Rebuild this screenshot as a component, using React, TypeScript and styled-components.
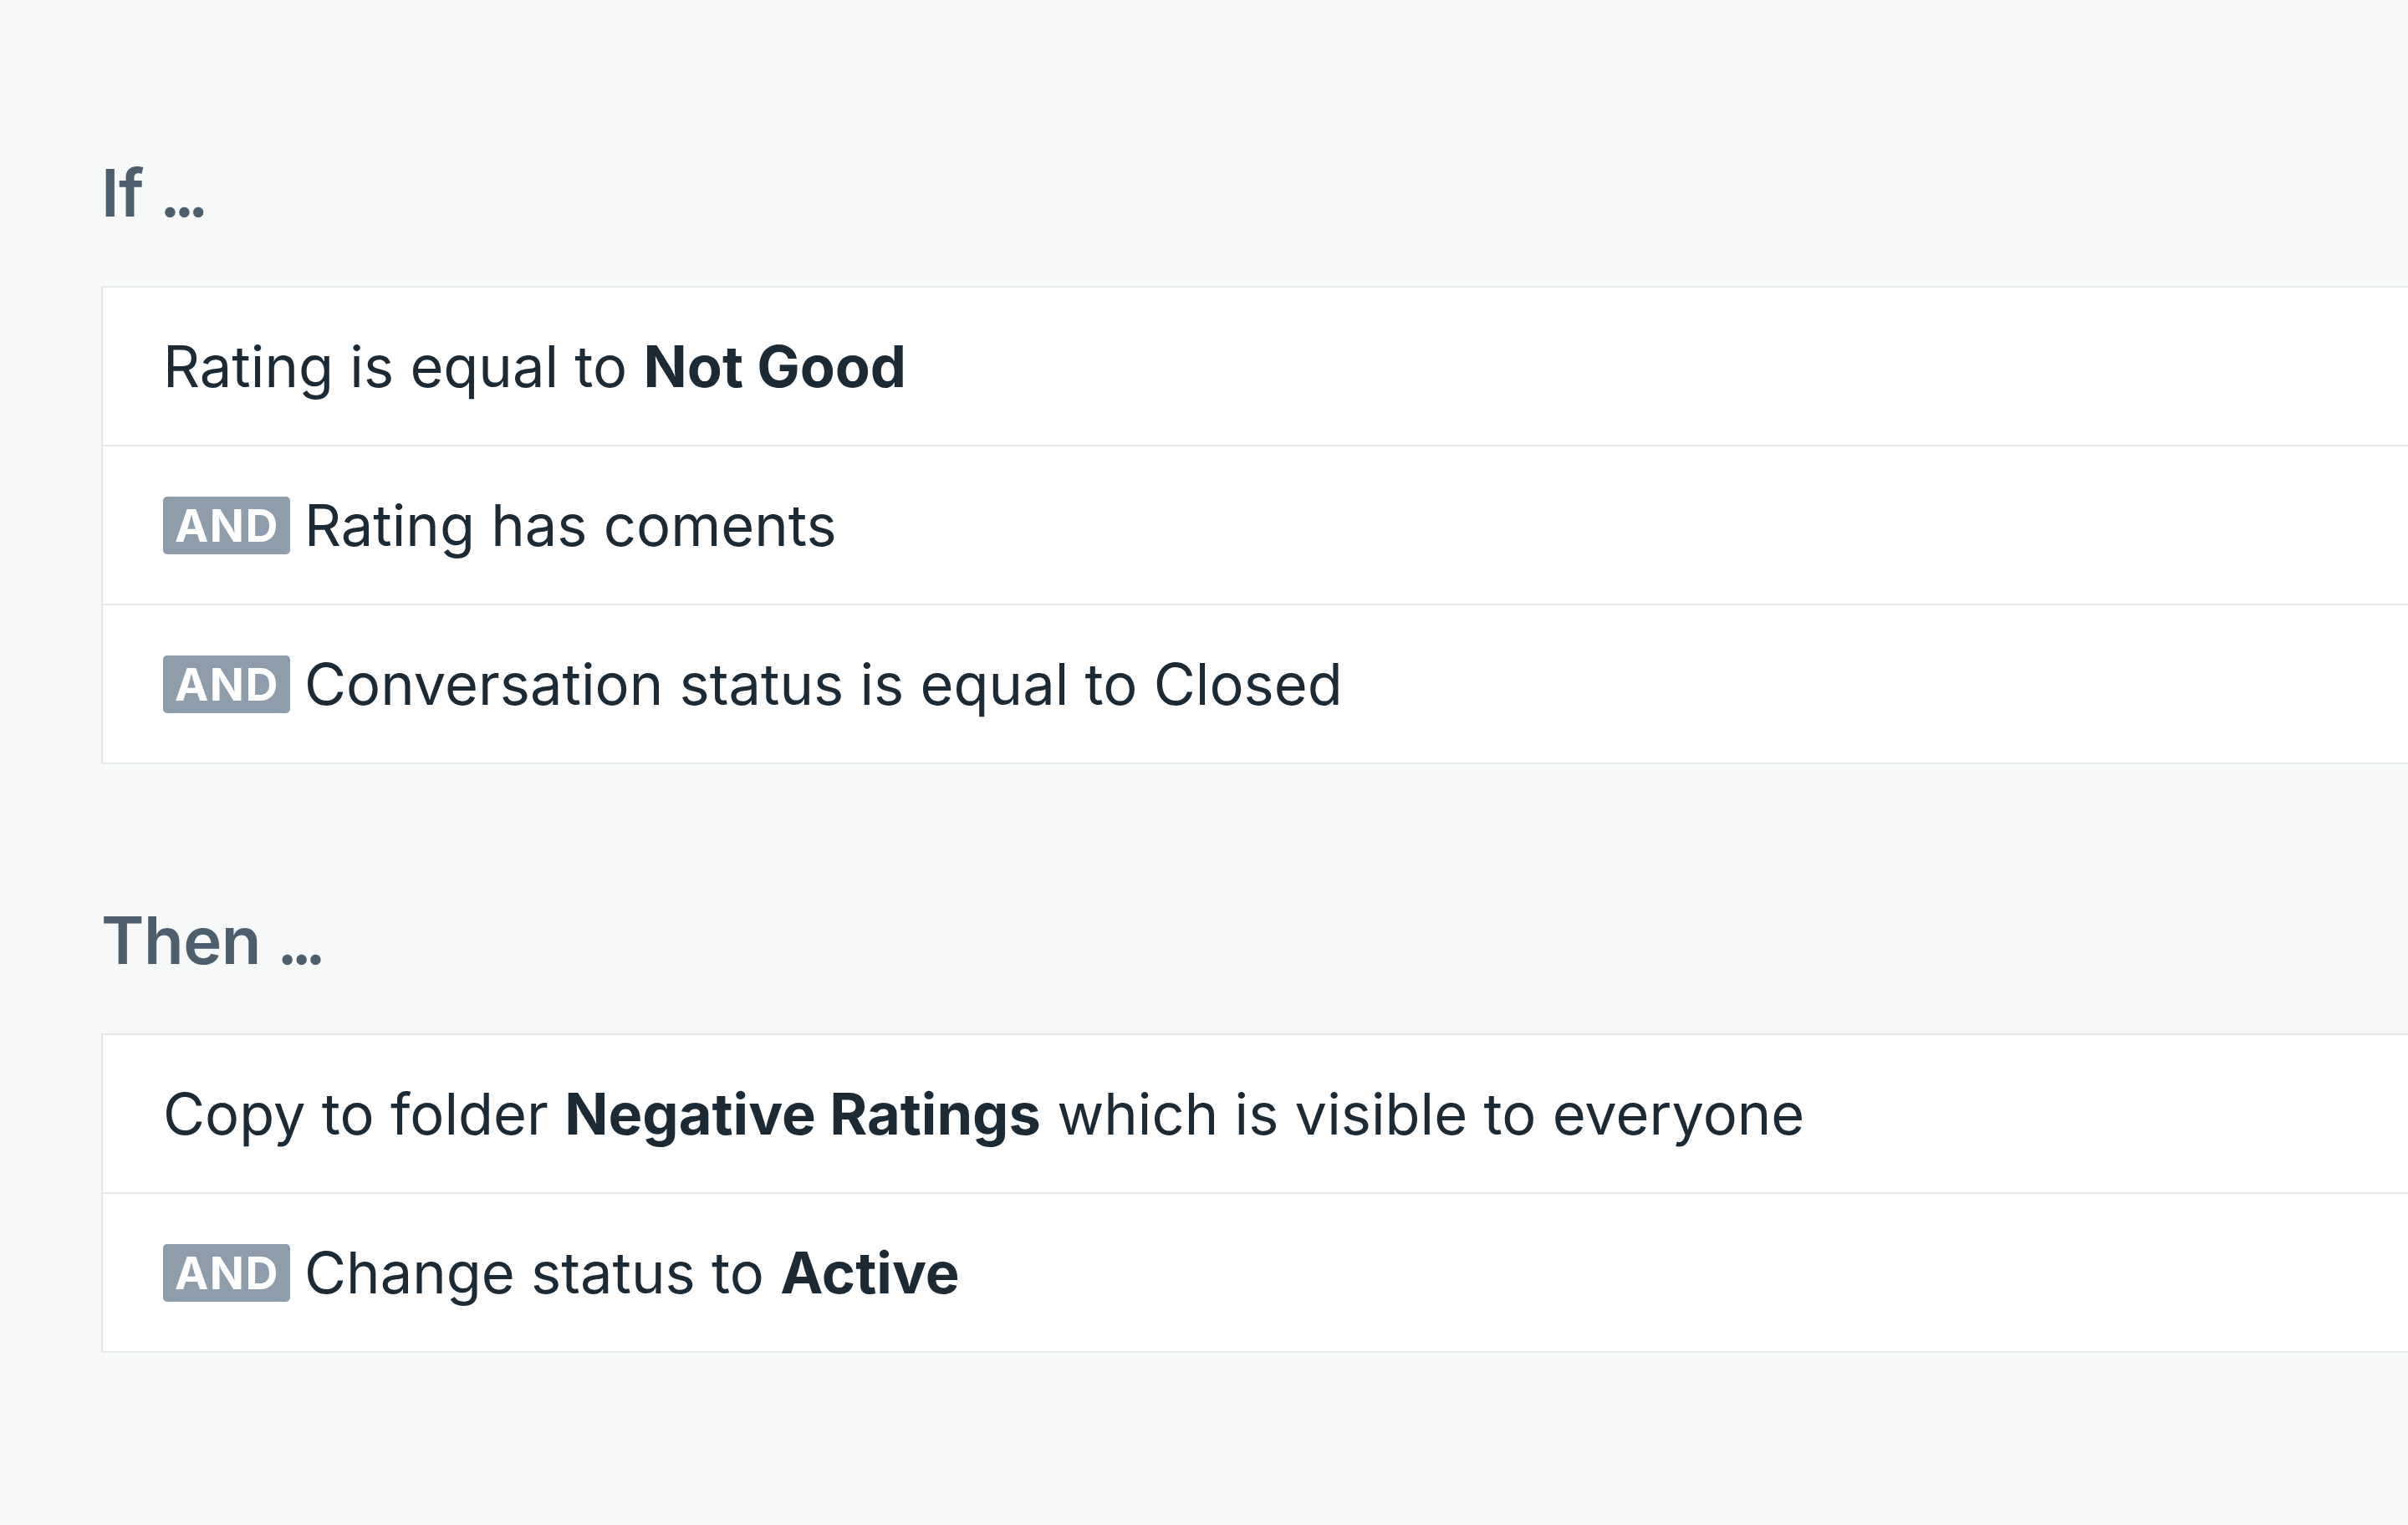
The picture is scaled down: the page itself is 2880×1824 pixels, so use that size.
import React from "react";
import styled, { createGlobalStyle } from "styled-components";

const GlobalStyle = createGlobalStyle`
  html, body {
    margin: 0;
    padding: 0;
    background: #f7f9f9;
    overflow: hidden;
  }

  body {
    font-family: Inter, "Noto Sans", "Liberation Sans", sans-serif;
    color: #1b2a35;
  }
`;

const Page = styled.div`
  width: 2880px;
  height: 1824px;
  padding: 192px 0 0 121px;
  box-sizing: border-box;
  overflow: hidden;
`;

const Section = styled.section<{ $gap?: number }>`
  margin-top: ${(p) => p.$gap || 0}px;
`;

const Heading = styled.h2`
  margin: 0 0 72px;
  font-size: 78px;
  line-height: 1;
  font-weight: 600;
  color: #4d5f6d;
  letter-spacing: -0.5px;
`;

const Dots = styled.span`
  letter-spacing: -8px;
`;

const Card = styled.div`
  background: #fff;
  border: 2px solid #e4e8e9;
  margin-right: -40px;
`;

const Row = styled.div`
  display: flex;
  align-items: center;
  gap: 17px;
  height: 188px;
  padding-left: 72px;
  font-size: 68.6px;
  font-weight: 400;
  color: #1b2a35;

  & + & {
    border-top: 2px solid #e4e8e9;
  }

  b {
    font-weight: 700;
  }
`;

const Badge = styled.span`
  display: inline-flex;
  align-items: center;
  height: 69px;
  padding: 0 13px 0 14px;
  border-radius: 5px;
  background: #8e9dab;
  color: #fff;
  font-size: 54px;
  font-weight: 700;
  letter-spacing: 1.5px;
`;

interface Clause {
  and?: boolean;
  text: React.ReactNode;
}

const conditions: Clause[] = [
  {
    text: (
      <span>
        Rating is equal to <b>Not Good</b>
      </span>
    ),
  },
  { and: true, text: <span>Rating has coments</span> },
  { and: true, text: <span>Conversation status is equal to Closed</span> },
];

const actions: Clause[] = [
  {
    text: (
      <span>
        Copy to folder <b>Negative Ratings</b> which is visible to everyone
      </span>
    ),
  },
  {
    and: true,
    text: (
      <span>
        Change status to <b>Active</b>
      </span>
    ),
  },
];

const RuleBlock = ({ title, items, gap }: { title: string; items: Clause[]; gap?: number }) => (
  <Section $gap={gap}>
    <Heading>
      {title} <Dots>...</Dots>
    </Heading>
    <Card>
      {items.map((item, i) => (
        <Row key={i}>
          {item.and && <Badge>AND</Badge>}
          {item.text}
        </Row>
      ))}
    </Card>
  </Section>
);

const App = () => {
  return (
    <Page>
      <GlobalStyle />
      <RuleBlock title="If" items={conditions} />
      <RuleBlock title="Then" items={actions} gap={172} />
    </Page>
  );
};

export default App;
